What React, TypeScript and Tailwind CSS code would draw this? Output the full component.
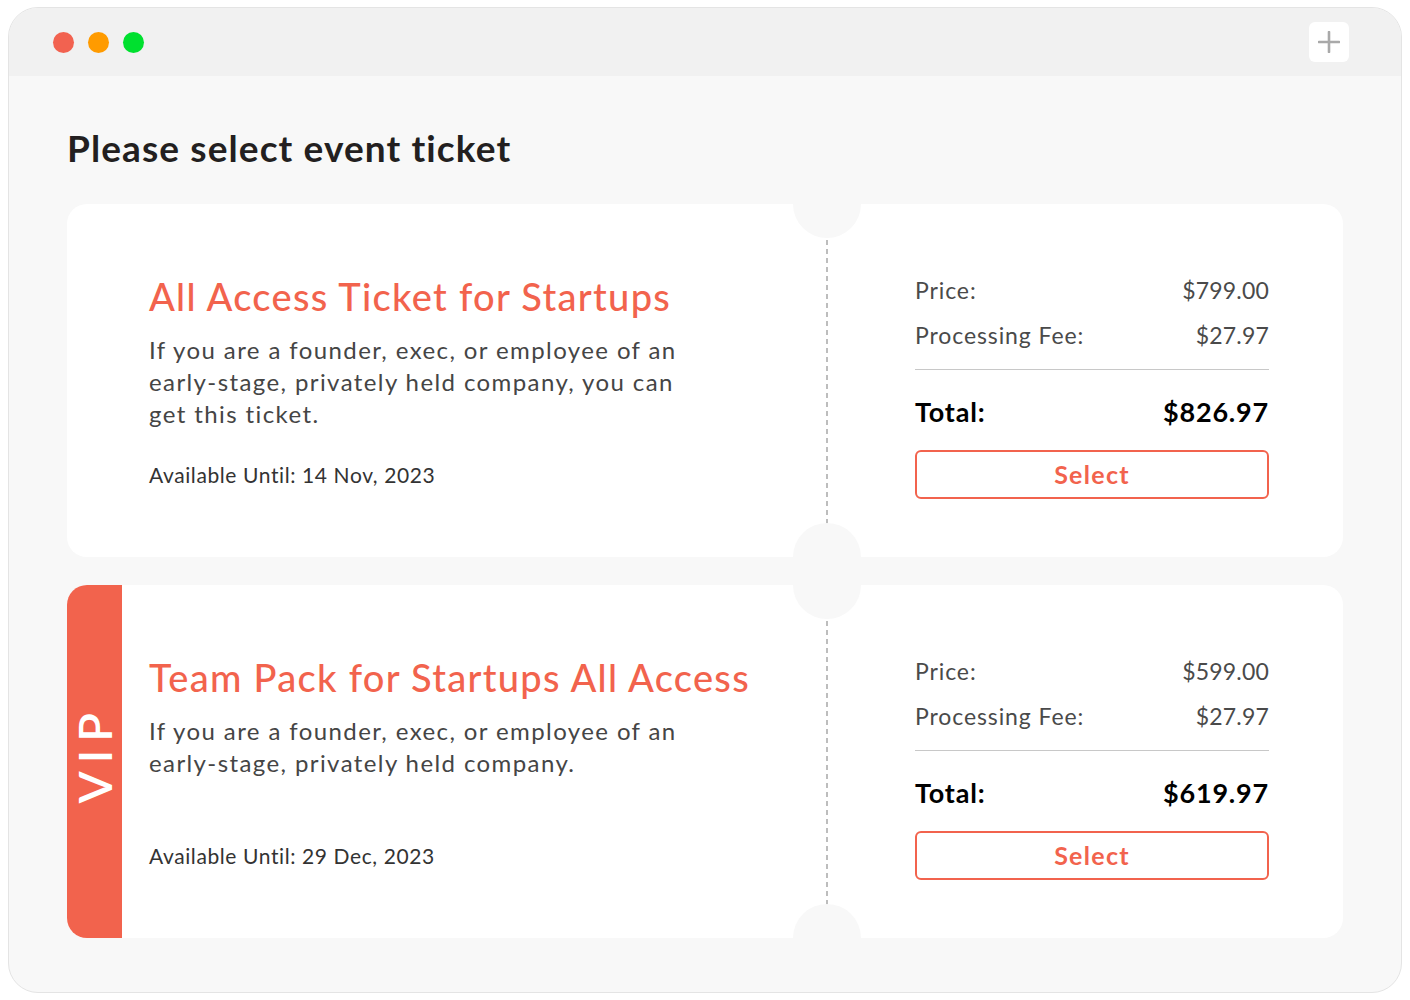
import React from "react";

type Ticket = {
  title: string;
  lines: string[];
  until: string;
  price: string;
  fee: string;
  total: string;
  vip?: boolean;
};

const tickets: Ticket[] = [
  {
    title: "All Access Ticket for Startups",
    lines: [
      "If you are a founder, exec, or employee of an",
      "early-stage, privately held company, you can",
      "get this ticket.",
    ],
    until: "Available Until: 14 Nov, 2023",
    price: "$799.00",
    fee: "$27.97",
    total: "$826.97",
  },
  {
    title: "Team Pack for Startups All Access",
    lines: [
      "If you are a founder, exec, or employee of an",
      "early-stage, privately held company.",
    ],
    until: "Available Until: 29 Dec, 2023",
    price: "$599.00",
    fee: "$27.97",
    total: "$619.97",
    vip: true,
  },
];

function TicketCard({ t }: { t: Ticket }) {
  return (
    <div className="relative flex h-[353px] rounded-[20px] bg-white">
      {/* notches */}
      <div className="absolute left-[726px] top-[-34px] h-[68px] w-[68px] rounded-full bg-[#f8f8f8]" />
      <div className="absolute left-[726px] bottom-[-34px] h-[68px] w-[68px] rounded-full bg-[#f8f8f8]" />

      {t.vip ? (
        <div className="flex w-[55px] shrink-0 items-center justify-center rounded-l-[20px] bg-[#f2634d] pb-[14px]">
          <span className="rotate-180 text-[47px] font-semibold leading-none tracking-[8px] text-white [writing-mode:vertical-rl]">
            VIP
          </span>
        </div>
      ) : null}

      <div
        className={
          "flex flex-1 flex-col pb-[68px] pt-[69px] " +
          (t.vip ? "pl-[27px]" : "pl-[82px]")
        }
      >
        <h2 className="text-[38px] font-medium leading-[46px] tracking-[1.3px] text-[#f2634d]">
          {t.title}
        </h2>
        <p className="mt-[15px] text-[24px] leading-[32px] tracking-[1.4px] text-[#454545]">
          {t.lines.map((l, i) => (
            <React.Fragment key={i}>
              {l}
              {i < t.lines.length - 1 ? <br /> : null}
            </React.Fragment>
          ))}
        </p>
        <div className="mt-auto text-[21px] leading-[28px] tracking-[0.6px] text-[#333333]">
          {t.until}
        </div>
      </div>

      <div className="w-[2px] shrink-0 bg-[repeating-linear-gradient(to_bottom,#bdbdbd_0px,#bdbdbd_5px,transparent_5px,transparent_9px)]" />

      <div className="flex w-[515px] shrink-0 flex-col pl-[87px] pr-[74px] pt-[70px]">
        <div className="flex items-center justify-between text-[23px] leading-[32px] tracking-[0.9px] text-[#4a4a4a]">
          <span>Price:</span>
          <span className="tracking-[0.2px]">{t.price}</span>
        </div>
        <div className="mt-[13px] flex items-center justify-between text-[23px] leading-[32px] tracking-[0.9px] text-[#4a4a4a]">
          <span>Processing Fee:</span>
          <span className="tracking-[0.2px]">{t.fee}</span>
        </div>
        <div className="mt-[18px] h-px bg-[#c8c8c8]" />
        <div className="mt-[24px] flex items-center justify-between text-[27px] font-bold leading-[36px] tracking-[0.8px] text-black">
          <span>Total:</span>
          <span>{t.total}</span>
        </div>
        <button className="mt-[20px] flex h-[49px] items-center justify-center rounded-[6px] border-2 border-[#f2634d] bg-white text-[25px] font-bold tracking-[1.3px] text-[#f2634d]">
          Select
        </button>
      </div>
    </div>
  );
}

export default function App() {
  return (
    <div
      className="h-[1000px] w-[1410px] bg-white pl-[8px] pt-[7px]"
      style={{ fontFamily: "Lato, 'Open Sans', sans-serif" }}
    >
      <div className="flex h-[986px] w-[1394px] flex-col overflow-hidden rounded-[30px] border border-[#e4e4e4] bg-[#f8f8f8]">
        <div className="flex h-[68px] shrink-0 items-center justify-between bg-[#f1f1f1] pl-[44px] pr-[52px]">
          <div className="flex items-center gap-[14px]">
            <span className="h-[21px] w-[21px] rounded-full bg-[#f26250]" />
            <span className="h-[21px] w-[21px] rounded-full bg-[#ff9b00]" />
            <span className="h-[21px] w-[21px] rounded-full bg-[#00e02f]" />
          </div>
          <div className="flex h-[40px] w-[40px] items-center justify-center rounded-[6px] bg-white">
            <svg width="22" height="22" viewBox="0 0 22 22" fill="none">
              <path d="M11 1v20M1 11h20" stroke="#a9a9a9" strokeWidth="2.6" strokeLinecap="round" />
            </svg>
          </div>
        </div>
        <div className="flex flex-col px-[58px] pt-[50px]">
          <h1 className="text-[37px] font-bold leading-[44px] tracking-[1.1px] text-[#231f20]">
            Please select event ticket
          </h1>
          <div className="mt-[34px] flex flex-col gap-[28px]">
            {tickets.map((t, i) => (
              <TicketCard key={i} t={t} />
            ))}
          </div>
        </div>
      </div>
    </div>
  );
}
